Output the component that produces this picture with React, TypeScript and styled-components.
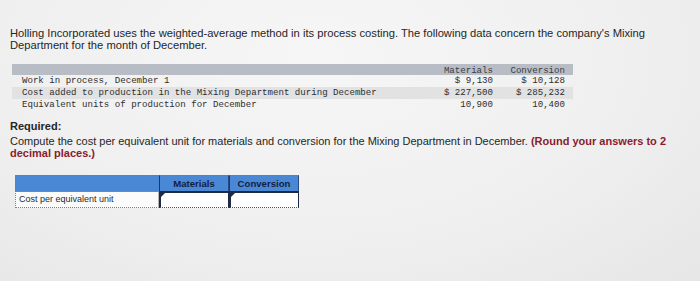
import React from "react";
import styled, { createGlobalStyle } from "styled-components";

const Global = createGlobalStyle`
  html, body { margin: 0; padding: 0; }
  body {
    background: #efefef;
    width: 700px;
    height: 281px;
    overflow: hidden;
    font-family: "Liberation Sans", Arial, sans-serif;
    color: #262626;
  }
`;

const Page = styled.div`
  width: 700px;
  height: 281px;
  box-sizing: border-box;
  padding: 27px 10px 0 10px;
  background: radial-gradient(ellipse at 45% 20%, #f6f6f6 0%, #efefef 60%, #e6e6e6 100%);
`;

const Intro = styled.p`
  margin: 0;
  font-size: 11.2px;
  line-height: 12px;
  width: 660px;
`;

const DataTable = styled.div`
  margin: 13px 0 0 2px;
  width: 561px;
  font-family: "Liberation Mono", "Courier New", monospace;
  font-size: 9.1px;
  color: #2e2e2e;
`;

const DataRow = styled.div<{ $kind?: "head" | "stripe" | "plain" }>`
  display: grid;
  grid-template-columns: 1fr 60px 72px;
  padding: 0 8px 0 10px;
  height: ${(p) => (p.$kind === "head" ? "11px" : "12px")};
  line-height: ${(p) => (p.$kind === "head" ? "13px" : "12px")};
  background: ${(p) =>
    p.$kind === "head" ? "#b8bcc5" : p.$kind === "stripe" ? "#e2e2e3" : "transparent"};
  color: ${(p) => (p.$kind === "head" ? "#3a3d44" : "#2e2e2e")};
  white-space: pre;
`;

const Num = styled.span`
  text-align: right;
`;

const Required = styled.div`
  margin-top: 9px;
  font-size: 11px;
  line-height: 12px;
  width: 662px;
`;

const ReqTitle = styled.div`
  font-weight: bold;
  margin-bottom: 3px;
`;

const Emph = styled.b`
  color: #8a1c2c;
`;

const AnswerTable = styled.div`
  margin: 16px 0 0 5px;
  width: 284px;
  display: grid;
  grid-template-columns: 144px 70px 70px;
  grid-template-rows: 16px 17px;
  font-size: 9px;
`;

const HeadCell = styled.div<{ $first?: boolean }>`
  background: #4a88d5;
  border-top: 1px dotted #6f7c8e;
  border-left: ${(p) => (p.$first ? "1px dotted #6f7c8e" : "1px solid #1e3866")};
  ${(p) => (p.$first ? "" : "border-right: 1px solid #2b4c80;")}
  color: #12213f;
  font-weight: bold;
  font-size: 9.6px;
  text-align: center;
  line-height: 16px;
  box-sizing: border-box;
`;

const LabelCell = styled.div`
  background: #fbfbfb;
  border: 1px dotted #7d7d7d;
  border-top: 1px solid #7a8699;
  border-right: 1px solid #b5b5b5;
  box-sizing: border-box;
  padding-left: 3px;
  line-height: 15px;
  color: #2a2a2a;
`;

const InputCell = styled.div`
  position: relative;
  background: #ffffff;
  border-left: 2px solid #1c2a45;
  border-top: 2px solid #1c2a45;
  border-bottom: 1px dotted #555;
  border-right: 1px solid #1c2a45;
  box-sizing: border-box;
  &::before {
    content: "";
    position: absolute;
    left: 0;
    top: 0;
    border-left: 4px solid #1c2a45;
    border-bottom: 4px solid transparent;
  }
`;

export default function App() {
  return (
    <>
      <Global />
      <Page>
        <Intro>
          Holling Incorporated uses the weighted-average method in its process costing. The following data
          concern the company's Mixing Department for the month of December.
        </Intro>
        <DataTable>
          <DataRow $kind="head">
            <span />
            <Num>Materials</Num>
            <Num>Conversion</Num>
          </DataRow>
          <DataRow>
            <span>Work in process, December 1</span>
            <Num>$ 9,130</Num>
            <Num>$ 10,128</Num>
          </DataRow>
          <DataRow $kind="stripe">
            <span>Cost added to production in the Mixing Department during December</span>
            <Num>$ 227,500</Num>
            <Num>$ 285,232</Num>
          </DataRow>
          <DataRow>
            <span>Equivalent units of production for December</span>
            <Num>10,900</Num>
            <Num>10,400</Num>
          </DataRow>
        </DataTable>
        <Required>
          <ReqTitle>Required:</ReqTitle>
          <span>
            Compute the cost per equivalent unit for materials and conversion for the Mixing Department in
            December. <Emph>(Round your answers to 2</Emph>
          </span>
          <br />
          <Emph>decimal places.)</Emph>
        </Required>
        <AnswerTable>
          <HeadCell $first />
          <HeadCell>Materials</HeadCell>
          <HeadCell>Conversion</HeadCell>
          <LabelCell>Cost per equivalent unit</LabelCell>
          <InputCell />
          <InputCell />
        </AnswerTable>
      </Page>
    </>
  );
}
